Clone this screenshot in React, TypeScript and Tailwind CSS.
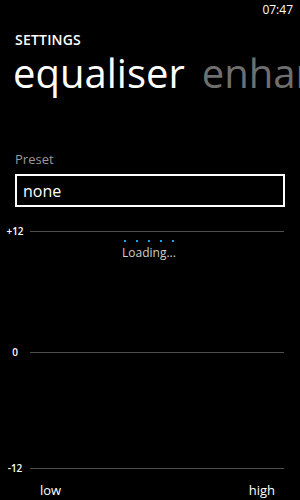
const font = { fontFamily: '"Open Sans", "Noto Sans", sans-serif' };

function Row({ label }: { label: string }) {
  return (
    <div className="flex items-center h-[12px]">
      <span className="w-[30px] text-center text-[10px] font-semibold text-white leading-none">{label}</span>
      <div className="flex-1 h-px bg-[#4f4f4f] mr-[16px]" />
    </div>
  );
}

export default function App() {
  const dots = [0, 1, 2, 3, 4];
  return (
    <div className="w-[300px] h-[500px] bg-black text-white overflow-hidden flex flex-col" style={font}>
      <div className="flex justify-end pr-[7px] pt-[1px] h-[20px] text-[12px] leading-[18px] text-white">07:47</div>
      <div className="pl-[15px] mt-[11px] text-[14px] font-semibold leading-[18px] tracking-[0.2px]">SETTINGS</div>
      <div className="pl-[13px] mt-[2px] flex whitespace-nowrap text-[40px] leading-[44px]">
        <span className="text-white mr-[17px]">equaliser</span>
        <span className="text-[#6f6f6f]">enhancements</span>
      </div>
      <div className="pl-[15px] mt-[55px] text-[13px] leading-[18px] text-[#9a9a9a]">Preset</div>
      <div className="mx-[15px] mt-[6px] h-[33px] border-2 border-white flex items-center pl-[6px] text-[16px] text-white">none</div>
      <div className="mt-[18px]">
        <Row label="+12" />
      </div>
      <div className="flex flex-col items-center mt-[3px] pr-[2px]">
        <div className="flex gap-[10px]">
          {dots.map(d => (
            <div key={d} className="w-[2px] h-[2px] bg-[#1ba1e2]" />
          ))}
        </div>
        <div className="text-[12px] leading-[16px] mt-[3px] text-[#cfcfcf]">Loading...</div>
      </div>
      <div className="mt-[85px]">
        <Row label="0" />
      </div>
      <div className="mt-[104px]">
        <Row label="-12" />
      </div>
      <div className="flex justify-between pl-[40px] pr-[25px] mt-[7px] text-[13px] leading-[18px] text-white">
        <span>low</span>
        <span>high</span>
      </div>
    </div>
  );
}
